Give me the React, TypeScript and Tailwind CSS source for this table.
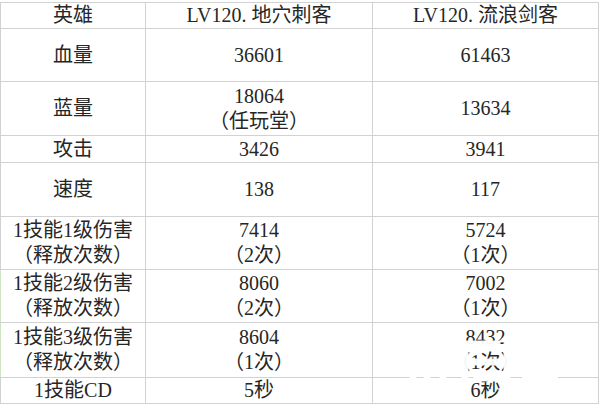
const rows: { h: string; label: string[]; a: string[]; b: string[] }[] = [
  { h: "h-[26px]", label: ["英雄"], a: ["LV120. 地穴刺客"], b: ["LV120. 流浪剑客"] },
  { h: "h-[53px]", label: ["血量"], a: ["36601"], b: ["61463"] },
  { h: "h-[54px]", label: ["蓝量"], a: ["18064", "（任玩堂）"], b: ["13634"] },
  { h: "h-[27px]", label: ["攻击"], a: ["3426"], b: ["3941"] },
  { h: "h-[54px]", label: ["速度"], a: ["138"], b: ["117"] },
  { h: "h-[53px]", label: ["1技能1级伤害", "（释放次数）"], a: ["7414", "（2次）"], b: ["5724", "（1次）"] },
  { h: "h-[53px]", label: ["1技能2级伤害", "（释放次数）"], a: ["8060", "（2次）"], b: ["7002", "（1次）"] },
  { h: "h-[55px]", label: ["1技能3级伤害", "（释放次数）"], a: ["8604", "（1次）"], b: ["8432", "（1次）"] },
  { h: "h-[26px]", label: ["1技能CD"], a: ["5秒"], b: ["6秒"] },
];

function Cell({ lines, className = "" }: { lines: string[]; className?: string }) {
  return (
    <td className={`border border-[#d2d2d2] text-center align-middle p-0 ${className}`}>
      {lines.map((l, i) => (
        <div key={i} className="leading-[25px]">
          {l}
        </div>
      ))}
    </td>
  );
}

// faint white site watermark over the lower right cells
function Watermark() {
  return (
    <svg
      className="absolute left-[403px] top-[338px]"
      width="180"
      height="54"
      viewBox="0 0 180 54"
      fill="none"
      stroke="white"
      strokeOpacity="0.95"
      strokeLinecap="square"
    >
      <path d="M10 6v44M20 18h26M24 18v32M40 18v32M22 50h22" strokeWidth="7" />
      <path d="M54 6h40M62 12v38M74 24h30M74 40h30M104 8v42" strokeWidth="7" />
      <path d="M118 26h28M122 40h24M152 10v38" strokeWidth="6" />
    </svg>
  );
}

export default function App() {
  return (
    <div
      className="relative w-[600px] h-[407px] bg-white overflow-hidden pt-[2px] text-[#262626] text-[20px]"
      style={{ fontFamily: '"Liberation Serif", "Noto Sans CJK SC", serif' }}
    >
      <table className="border-collapse table-fixed w-[598px]">
        <colgroup>
          <col className="w-[145px]" />
          <col className="w-[227px]" />
          <col className="w-[226px]" />
        </colgroup>
        <tbody>
          {rows.map((r, i) => (
            <tr key={i} className={r.h}>
              <Cell lines={r.label} className={i >= 6 && i <= 7 ? "border-l-[#cfe3c4]" : ""} />
              <Cell lines={r.a} />
              <Cell lines={r.b} />
            </tr>
          ))}
        </tbody>
      </table>
      <Watermark />
    </div>
  );
}
